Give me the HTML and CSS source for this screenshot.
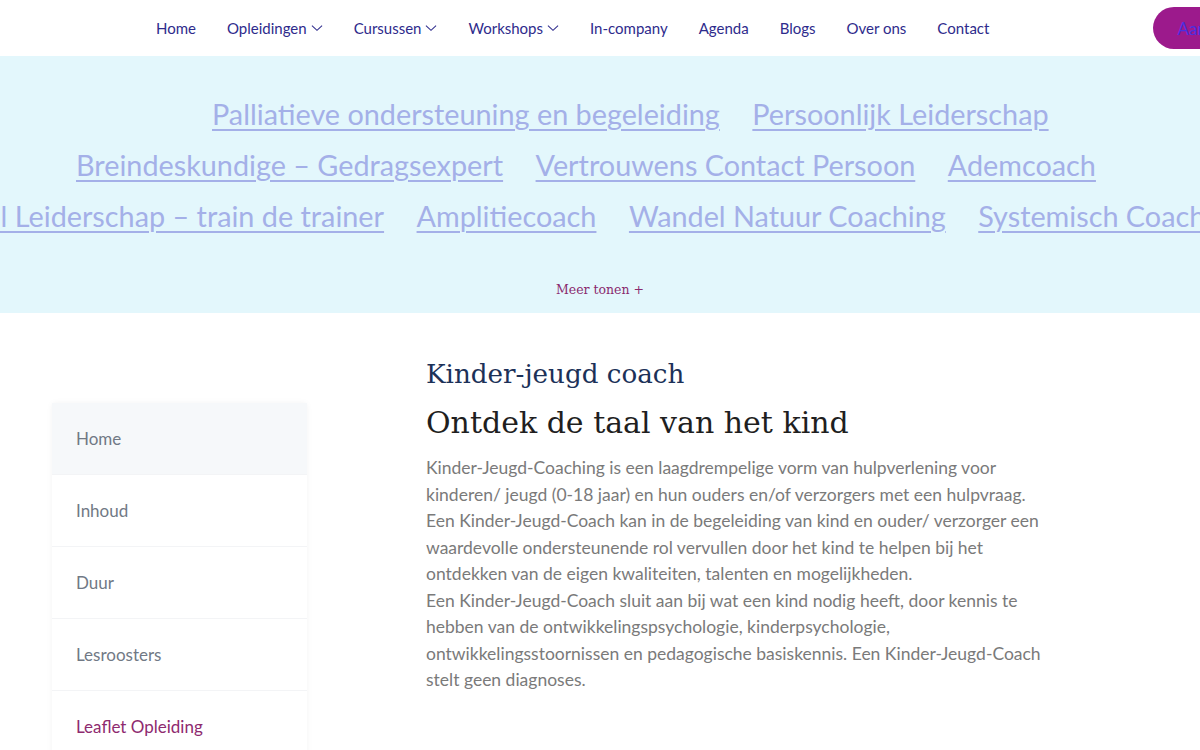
FILE: index.html
```html
<!DOCTYPE html>
<html lang="nl">
<head>
<meta charset="utf-8">
<title>Kinder-jeugd coach</title>
<link rel="stylesheet" href="styles.css">
</head>
<body>
<header class="topbar">
  <nav class="mainnav">
    <a href="#">Home</a>
    <a href="#" class="dd">Opleidingen <svg viewBox="0 0 13 8" class="chev"><path d="M1 1.5 6.5 6.5 12 1.5"/></svg></a>
    <a href="#" class="dd">Cursussen <svg viewBox="0 0 13 8" class="chev"><path d="M1 1.5 6.5 6.5 12 1.5"/></svg></a>
    <a href="#" class="dd">Workshops <svg viewBox="0 0 13 8" class="chev"><path d="M1 1.5 6.5 6.5 12 1.5"/></svg></a>
    <a href="#">In-company</a>
    <a href="#">Agenda</a>
    <a href="#">Blogs</a>
    <a href="#">Over ons</a>
    <a href="#">Contact</a>
  </nav>
  <a href="#" class="cta">Aanmelden</a>
</header>

<section class="band">
  <div class="row row1">
    <a href="#">Palliatieve ondersteuning en begeleiding</a>
    <a href="#">Persoonlijk Leiderschap</a>
  </div>
  <div class="row row2">
    <a href="#">Breindeskundige – Gedragsexpert</a>
    <a href="#">Vertrouwens Contact Persoon</a>
    <a href="#">Ademcoach</a>
  </div>
  <div class="row row3">
    <a href="#">Natural Leiderschap – train de trainer</a>
    <a href="#">Amplitiecoach</a>
    <a href="#">Wandel Natuur Coaching</a>
    <a href="#">Systemisch Coach</a>
  </div>
  <a href="#" class="more">Meer tonen +</a>
</section>

<main class="content">
  <aside class="sidenav">
    <a href="#" class="side-item active">Home</a>
    <a href="#" class="side-item">Inhoud</a>
    <a href="#" class="side-item">Duur</a>
    <a href="#" class="side-item">Lesroosters</a>
    <a href="#" class="side-item leaflet">Leaflet Opleiding</a>
  </aside>
  <article class="article">
    <h2 class="kicker">Kinder-jeugd coach</h2>
    <h1 class="title">Ontdek de taal van het kind</h1>
    <p class="text">Kinder-Jeugd-Coaching is een laagdrempelige vorm van hulpverlening voor kinderen/ jeugd (0-18 jaar) en hun ouders en/of verzorgers met een hulpvraag.<br>Een Kinder-Jeugd-Coach kan in de begeleiding van kind en ouder/ verzorger een waardevolle ondersteunende rol vervullen door het kind te helpen bij het ontdekken van de eigen kwaliteiten, talenten en mogelijkheden.<br>Een Kinder-Jeugd-Coach sluit aan bij wat een kind nodig heeft, door kennis te hebben van de ontwikkelingspsychologie, kinderpsychologie, ontwikkelingsstoornissen en pedagogische basiskennis. Een Kinder-Jeugd-Coach stelt geen diagnoses.</p>
  </article>
</main>
</body>
</html>
```
FILE: styles.css
```css
html, body {
  margin: 0;
  padding: 0;
  overflow-x: hidden;
  background: #ffffff;
  font-family: Lato, "Open Sans", sans-serif;
}

a { text-decoration: none; }

.topbar {
  height: 56px;
  display: flex;
  align-items: center;
  white-space: nowrap;
  width: 1400px;
}

.mainnav {
  display: flex;
  align-items: center;
  gap: 31px;
  margin-left: 156px;
}

.mainnav a {
  font-size: 15px;
  color: #2e2b8c;
  display: inline-flex;
  align-items: center;
}

.chev {
  width: 12px;
  height: 8px;
  margin-left: 4px;
  fill: none;
  stroke: #2e2b8c;
  stroke-width: 1.1;
}

.cta {
  margin-left: 164px;
  height: 42px;
  padding: 0 24px;
  border-radius: 21px;
  background: #9c1a8c;
  color: #4a2fe0;
  font-size: 17px;
  display: flex;
  align-items: center;
}

.band {
  background: #e3f7fc;
  height: 257px;
  padding-top: 32px;
  box-sizing: border-box;
  overflow: hidden;
}

.row {
  display: flex;
  gap: 32.5px;
  white-space: nowrap;
  height: 51px;
  align-items: center;
}

.row a {
  font-size: 28.8px;
  color: #a4b0e8;
  text-decoration: underline;
  text-decoration-thickness: 1.5px;
  text-underline-offset: 4px;
}

.row1 { margin-left: 212px; }
.row2 { margin-left: 76px; }
.row3 { margin-left: -86px; }

.more {
  display: block;
  text-align: center;
  margin-top: 41px;
  font-family: "DejaVu Serif", serif;
  font-size: 12.5px;
  color: #8a2a6e;
}

.content {
  display: flex;
  align-items: flex-start;
  padding-top: 40px;
}

.sidenav {
  margin-left: 52px;
  margin-top: 50px;
  width: 255px;
  display: flex;
  flex-direction: column;
  border-radius: 4px;
  box-shadow: 0 0 6px rgba(0, 0, 0, 0.05);
}

.side-item {
  height: 71px;
  display: flex;
  align-items: center;
  padding-left: 24px;
  font-size: 17px;
  color: #717985;
  border-bottom: 1px solid #f3f4f6;
}

.side-item.active { background: #f6f8fa; }
.side-item.leaflet { color: #8e2a6f; }

.article {
  margin-left: 119px;
  width: 632px;
}

.kicker {
  margin: 0;
  font-family: "DejaVu Serif", serif;
  font-weight: normal;
  font-size: 26.2px;
  color: #1c3158;
  line-height: 42px;
}

.title {
  margin: 6px 0 0;
  font-family: "DejaVu Serif", serif;
  font-weight: normal;
  font-size: 30px;
  color: #1f1f1f;
  line-height: 44px;
}

.text {
  margin: 10px 0 0;
  font-size: 17.5px;
  line-height: 26.5px;
  color: #7a7a7a;
}
```
